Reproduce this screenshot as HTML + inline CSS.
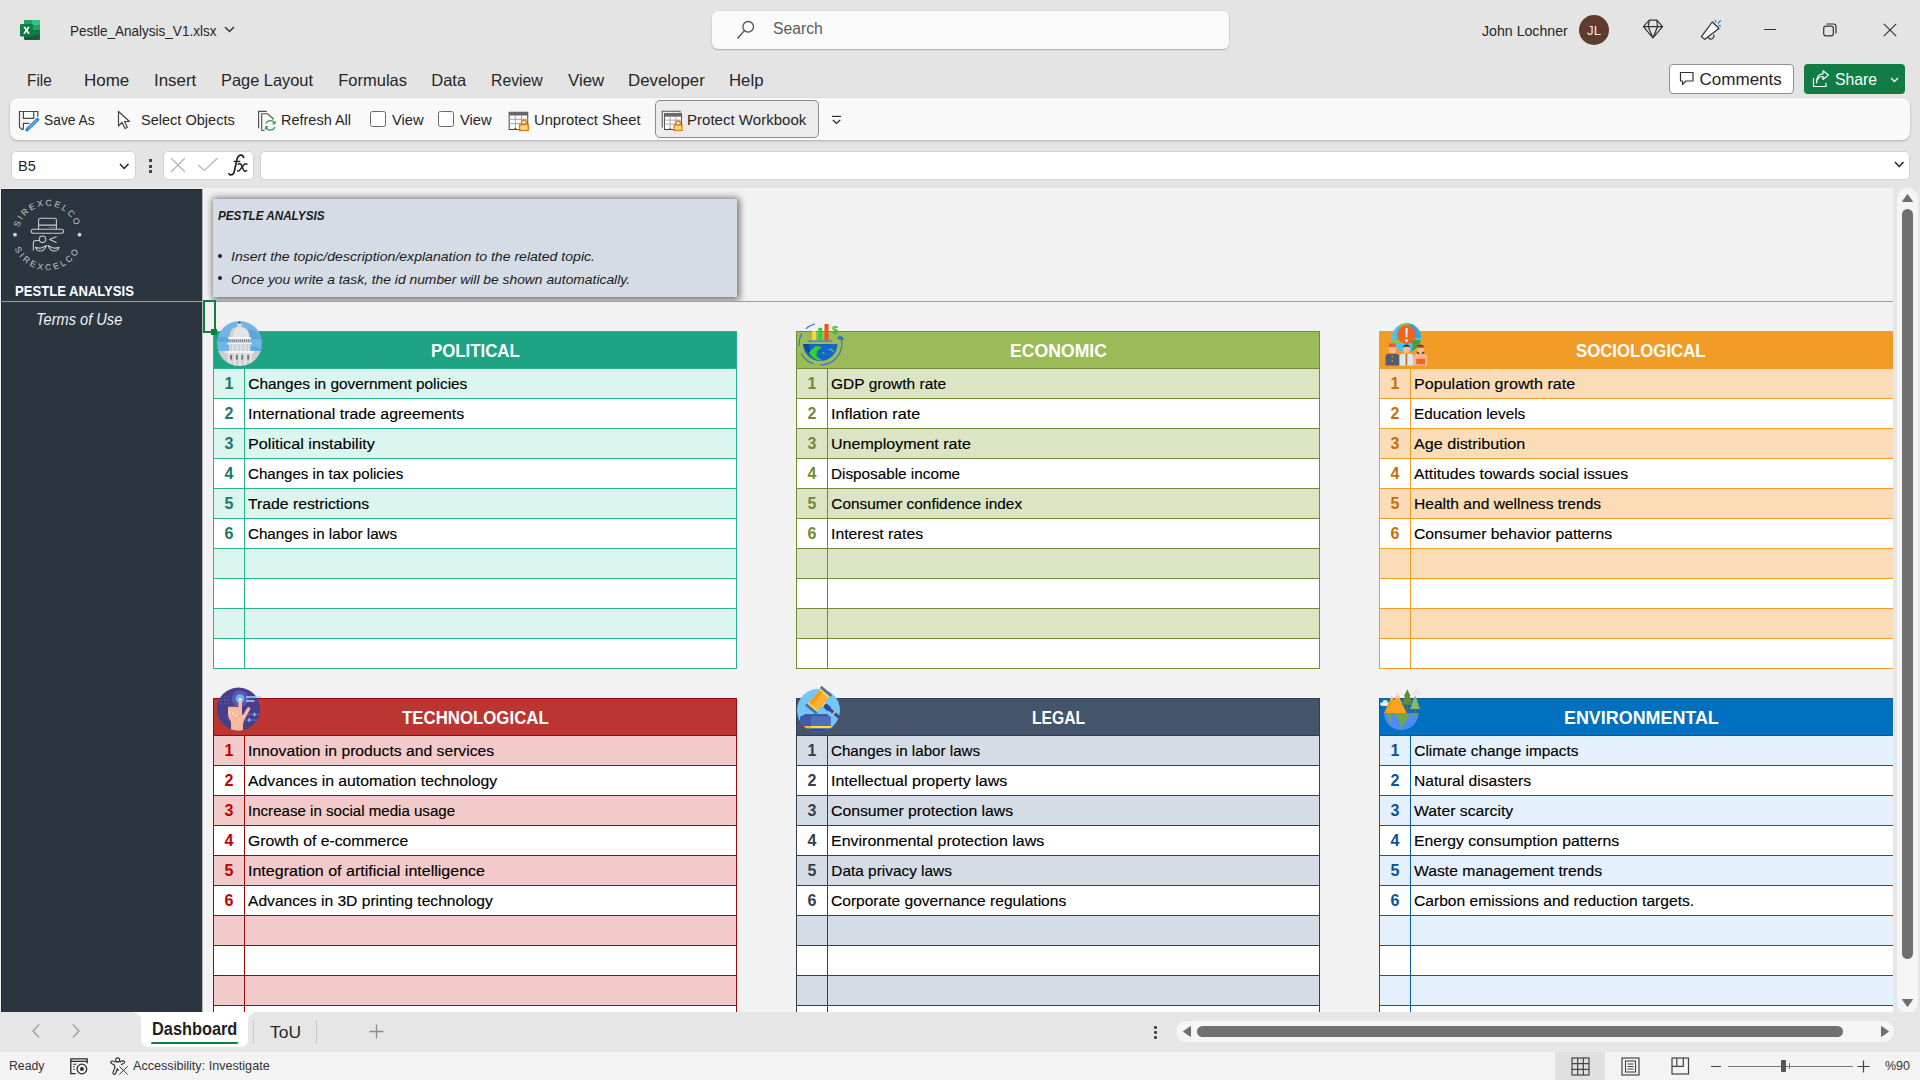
<!DOCTYPE html><html><head><meta charset="utf-8"><style>
html,body{margin:0;padding:0;width:1920px;height:1080px;overflow:hidden;background:#e4e4e4;font-family:"Liberation Sans",sans-serif;}
.r{position:absolute;box-sizing:border-box;}
.t{position:absolute;white-space:nowrap;line-height:1;}
svg.r{overflow:visible}
</style></head><body>
<div class="r" style="left:0px;top:0px;width:1920px;height:189px;background:#e4e4e4"></div>
<svg class="r" style="left:20px;top:20px" width="20" height="20" viewBox="0 0 20 20">
<rect x="4" y="0" width="16" height="20" rx="1.2" fill="#185c37"/>
<rect x="4" y="0" width="16" height="5" rx="1" fill="#21a366"/>
<rect x="12" y="0" width="8" height="5" rx="1" fill="#33c481"/>
<rect x="4" y="5" width="16" height="5" fill="#107c41"/>
<rect x="12" y="5" width="8" height="5" fill="#21a366"/>
<rect x="4" y="10" width="16" height="5" fill="#185c37"/>
<rect x="12" y="10" width="8" height="5" fill="#107c41"/>
<rect x="0" y="4" width="13" height="12.5" rx="1.2" fill="#107c41"/>
<path d="M3.3 6.8 L5.4 6.8 L6.6 9 L7.8 6.8 L9.8 6.8 L7.7 10.2 L9.9 13.7 L7.8 13.7 L6.5 11.4 L5.2 13.7 L3.2 13.7 L5.4 10.2 Z" fill="#fff"/>
</svg>
<div class="t" style="left:69.60px;top:22.86px;font-size:15.40px;color:#262626;font-weight:normal;font-style:normal;transform:scaleX(0.8777);transform-origin:0 0;">Pestle_Analysis_V1.xlsx</div>
<svg class="r" style="left:224px;top:26px" width="11" height="7" viewBox="0 0 11 7"><path d="M1 1 L5.5 5.5 L10 1" stroke="#333" stroke-width="1.5" fill="none"/></svg>
<div class="r" style="left:712px;top:11px;width:517px;height:38px;background:#fafafa;border-radius:6px;box-shadow:0 1px 1.5px rgba(0,0,0,0.22), 0 0 0 0.5px rgba(0,0,0,0.06)"></div>
<svg class="r" style="left:736px;top:20px" width="16" height="20" viewBox="0 0 16 20"><circle cx="12.2" cy="6.8" r="5.3" stroke="#505050" stroke-width="1.3" fill="none"/><path d="M8.4 10.6 L1.5 18.5" stroke="#505050" stroke-width="1.4"/></svg>
<div class="t" style="left:772.50px;top:21.26px;font-size:16.00px;color:#5c5c5c;font-weight:normal;font-style:normal;transform:scaleX(0.9823);transform-origin:0 0;">Search</div>
<div class="t" style="left:1482.00px;top:22.95px;font-size:15.30px;color:#262626;font-weight:normal;font-style:normal;transform:scaleX(0.9254);transform-origin:0 0;">John Lochner</div>
<div class="r" style="left:1579px;top:15px;width:30px;height:30px;border-radius:50%;background:#5f3b2f"></div>
<div class="t" style="left:1587.00px;top:24.84px;font-size:12.00px;color:#f0e8e4;font-weight:normal;font-style:normal;transform:scaleX(1.1046);transform-origin:0 0;">JL</div>
<svg class="r" style="left:1643px;top:19px" width="20" height="20" viewBox="0 0 20 20"><path d="M6.3 1.2 L13.8 1.2 L19.6 7.7 L9.9 18.9 L0.4 7.7 Z M0.4 7.7 L19.6 7.7 M6.3 1.2 L5.3 7.7 L9.9 18.9 L14.5 7.7 L13.8 1.2" stroke="#333" stroke-width="1.2" fill="none" stroke-linejoin="round"/></svg>
<svg class="r" style="left:1700px;top:18px" width="24" height="24" viewBox="0 0 24 24"><path d="M8.2 19.4 A2.9 2.9 0 1 0 13.6 16.6" stroke="#333" stroke-width="1.2" fill="none"/><path d="M1.4 18.6 L4.5 21.4 L19 10.5 L12.3 4 Z" stroke="#333" stroke-width="1.25" fill="#f7f7f7" stroke-linejoin="round"/><path d="M15.2 2.4 L15.6 4.2 M18.3 5 L20.4 2.7 M18.5 7.4 L20.6 8.1" stroke="#1e88e5" stroke-width="1.25" stroke-linecap="round"/></svg>
<div class="r" style="left:1764px;top:29px;width:12px;height:1.2px;background:#333"></div>
<svg class="r" style="left:1823px;top:23px" width="14" height="14" viewBox="0 0 14 14"><rect x="0.7" y="3.2" width="9.6" height="9.6" rx="2" stroke="#333" stroke-width="1.2" fill="none"/><path d="M3.5 1 L10.5 1 Q13 1 13 3.5 L13 10.5" stroke="#333" stroke-width="1.2" fill="none"/></svg>
<svg class="r" style="left:1883px;top:23px" width="14" height="14" viewBox="0 0 14 14"><path d="M0.8 0.8 L13.2 13.2 M13.2 0.8 L0.8 13.2" stroke="#333" stroke-width="1.2"/></svg>
<div class="t" style="left:27.00px;top:72.33px;font-size:16.50px;color:#262626;font-weight:normal;font-style:normal;transform:scaleX(0.9309);transform-origin:0 0;">File</div>
<div class="t" style="left:84.25px;top:72.33px;font-size:16.50px;color:#262626;font-weight:normal;font-style:normal;transform:scaleX(1.0281);transform-origin:0 0;">Home</div>
<div class="t" style="left:154.00px;top:72.33px;font-size:16.50px;color:#262626;font-weight:normal;font-style:normal;transform:scaleX(1.0238);transform-origin:0 0;">Insert</div>
<div class="t" style="left:221.25px;top:72.33px;font-size:16.50px;color:#262626;font-weight:normal;font-style:normal;transform:scaleX(0.9929);transform-origin:0 0;">Page Layout</div>
<div class="t" style="left:338.25px;top:72.33px;font-size:16.50px;color:#262626;font-weight:normal;font-style:normal;">Formulas</div>
<div class="t" style="left:431.25px;top:72.33px;font-size:16.50px;color:#262626;font-weight:normal;font-style:normal;">Data</div>
<div class="t" style="left:491.25px;top:72.33px;font-size:16.50px;color:#262626;font-weight:normal;font-style:normal;transform:scaleX(0.9565);transform-origin:0 0;">Review</div>
<div class="t" style="left:568.00px;top:72.33px;font-size:16.50px;color:#262626;font-weight:normal;font-style:normal;transform:scaleX(1.0221);transform-origin:0 0;">View</div>
<div class="t" style="left:628.25px;top:72.33px;font-size:16.50px;color:#262626;font-weight:normal;font-style:normal;transform:scaleX(1.0205);transform-origin:0 0;">Developer</div>
<div class="t" style="left:729.25px;top:72.33px;font-size:16.50px;color:#262626;font-weight:normal;font-style:normal;transform:scaleX(1.0166);transform-origin:0 0;">Help</div>
<div class="r" style="left:1669px;top:64px;width:125px;height:30px;background:#fff;border:1px solid #8f8f8f;border-radius:4px"></div>
<svg class="r" style="left:1679px;top:71px" width="16" height="16" viewBox="0 0 16 16"><path d="M1.5 1.5 L14 1.5 L14 10 L7 10 L3.5 13.5 L3.5 10 L1.5 10 Z" stroke="#333" stroke-width="1.2" fill="none" stroke-linejoin="round"/></svg>
<div class="t" style="left:1699.60px;top:70.81px;font-size:17.00px;color:#262626;font-weight:normal;font-style:normal;">Comments</div>
<div class="r" style="left:1804px;top:64px;width:101px;height:30px;background:#117c43;border-radius:4px"></div>
<svg class="r" style="left:1812px;top:70px" width="18" height="18" viewBox="0 0 18 18"><path d="M1.5 8 L1.5 16.5 L14 16.5 L14 13" stroke="#fff" stroke-width="1.2" fill="none"/><path d="M4.5 13 Q5 6.5 11 6.5 L11 9.5 L16.5 5 L11 0.8 L11 3.8 Q4.5 4 4.5 13 Z" stroke="#fff" stroke-width="1.2" fill="none" stroke-linejoin="round"/></svg>
<div class="t" style="left:1834.50px;top:70.81px;font-size:17.00px;color:#ffffff;font-weight:normal;font-style:normal;transform:scaleX(0.9258);transform-origin:0 0;">Share</div>
<svg class="r" style="left:1890px;top:77px" width="9" height="6" viewBox="0 0 9 6"><path d="M1 1 L4.5 4.5 L8 1" stroke="#fff" stroke-width="1.3" fill="none"/></svg>
<div class="r" style="left:10px;top:98px;width:1900px;height:42px;background:#f9f9f9;border-radius:8px;box-shadow:0 1px 2.5px rgba(0,0,0,0.25)"></div>
<svg class="r" style="left:18px;top:110px" width="23" height="22" viewBox="0 0 23 22"><path d="M1.5 17 L1.5 1.5 L19.8 1.5 L19.8 6.8" stroke="#4a4a4a" stroke-width="1.2" fill="none"/><path d="M1.5 17 L3.8 19.3 L5.6 19.3" stroke="#4a4a4a" stroke-width="1.2" fill="none"/><path d="M5.4 1.5 L5.4 8.3 L15.7 8.3 L15.7 1.5" stroke="#4a4a4a" stroke-width="1.2" fill="none"/><path d="M5.4 19.3 L5.4 13.4 L11.5 13.4" stroke="#4a4a4a" stroke-width="1.2" fill="none"/><path d="M9.2 19.6 L19.6 9.6" stroke="#2b88d8" stroke-width="3.4" stroke-linecap="round"/><path d="M10.2 18.6 L19 10.2" stroke="#9fcdf3" stroke-width="0.9"/><path d="M7.8 21 L9.6 19.2" stroke="#2b88d8" stroke-width="1.6"/></svg>
<div class="t" style="left:44.30px;top:111.78px;font-size:15.50px;color:#262626;font-weight:normal;font-style:normal;transform:scaleX(0.8915);transform-origin:0 0;">Save As</div>
<svg class="r" style="left:117px;top:110px" width="15" height="20" viewBox="0 0 15 20"><path d="M1.5 1.5 L1.5 16 L5 12.5 L8 18.5 L10.3 17.3 L7.5 11.5 L12.5 11.5 Z" stroke="#444" stroke-width="1.2" fill="none" stroke-linejoin="round"/></svg>
<div class="t" style="left:141.30px;top:111.78px;font-size:15.50px;color:#262626;font-weight:normal;font-style:normal;transform:scaleX(0.9376);transform-origin:0 0;">Select Objects</div>
<svg class="r" style="left:257px;top:110px" width="21" height="22" viewBox="0 0 21 22"><path d="M1.6 18.2 L1.6 1.4 L9.8 1.4" stroke="#505050" stroke-width="1.15" fill="none"/><path d="M4.7 20.5 L4.7 3.7 L10.6 3.7 L16 8.6 L16 9.8 M4.7 20.5 L7.5 20.5" stroke="#505050" stroke-width="1.15" fill="none"/><path d="M8.8 13.66 A4.8 4.8 0 0 1 17.8 13.66 M15.4 13.9 L17.9 13.7 L18.3 11.2" stroke="#2ea043" stroke-width="1.2" fill="none"/><path d="M17.8 16.94 A4.8 4.8 0 0 1 8.8 16.94 M11.2 16.7 L8.7 16.9 L8.3 19.4" stroke="#2ea043" stroke-width="1.2" fill="none"/></svg>
<div class="t" style="left:281.30px;top:111.78px;font-size:15.50px;color:#262626;font-weight:normal;font-style:normal;transform:scaleX(0.9339);transform-origin:0 0;">Refresh All</div>
<div class="r" style="left:370px;top:111px;width:16px;height:16px;background:#fff;border:1px solid #6a6a6a;border-radius:2.5px"></div>
<div class="t" style="left:392.00px;top:111.78px;font-size:15.50px;color:#262626;font-weight:normal;font-style:normal;transform:scaleX(0.9514);transform-origin:0 0;">View</div>
<div class="r" style="left:438px;top:111px;width:16px;height:16px;background:#fff;border:1px solid #6a6a6a;border-radius:2.5px"></div>
<div class="t" style="left:460.00px;top:111.78px;font-size:15.50px;color:#262626;font-weight:normal;font-style:normal;transform:scaleX(0.9514);transform-origin:0 0;">View</div>
<svg class="r" style="left:508px;top:110px" width="23" height="23" viewBox="0 0 23 23"><g transform="translate(0 0)"><rect x="1.2" y="2.3" width="18.5" height="17.2" stroke="#555" stroke-width="1.1" fill="#fff"/><rect x="1.2" y="2.3" width="18.5" height="3.2" fill="#666"/><path d="M1.2 9.3 L19.7 9.3 M1.2 13.6 L19.7 13.6 M7.3 5.5 L7.3 19.5 M13.5 5.5 L13.5 19.5" stroke="#9a9a9a" stroke-width="0.9"/><path d="M1.2 19.5 L6.5 19.5 L8 18" stroke="#444" stroke-width="1.1" fill="none"/><rect x="11.6" y="14.6" width="8.6" height="5.9" fill="#f8d88a" stroke="#e27d12" stroke-width="1.4"/><path d="M13.5 14.6 L13.5 12.6 A2.4 2.4 0 0 1 18.3 12.6 L18.3 14.6" stroke="#e27d12" stroke-width="1.4" fill="none"/></g></svg>
<div class="t" style="left:534.30px;top:111.78px;font-size:15.50px;color:#262626;font-weight:normal;font-style:normal;transform:scaleX(0.9508);transform-origin:0 0;">Unprotect Sheet</div>
<div class="r" style="left:655px;top:100px;width:164px;height:38px;background:#ececec;border:1px solid #8c8c8c;border-radius:5px"></div>
<svg class="r" style="left:661px;top:110px" width="23" height="23" viewBox="0 0 23 23"><path d="M1.2 17.5 L1.2 1.2 L19 1.2 L19 2.6" stroke="#555" stroke-width="1.1" fill="none"/><g transform="translate(2.4 1.6) scale(0.92)"><rect x="1.2" y="2.3" width="18.5" height="17.2" stroke="#555" stroke-width="1.1" fill="#fff"/><rect x="1.2" y="2.3" width="18.5" height="3.2" fill="#666"/><path d="M1.2 9.3 L19.7 9.3 M1.2 13.6 L19.7 13.6 M7.3 5.5 L7.3 19.5 M13.5 5.5 L13.5 19.5" stroke="#9a9a9a" stroke-width="0.9"/><path d="M1.2 19.5 L6.5 19.5 L8 18" stroke="#444" stroke-width="1.1" fill="none"/><rect x="11.6" y="14.6" width="8.6" height="5.9" fill="#f8d88a" stroke="#e27d12" stroke-width="1.4"/><path d="M13.5 14.6 L13.5 12.6 A2.4 2.4 0 0 1 18.3 12.6 L18.3 14.6" stroke="#e27d12" stroke-width="1.4" fill="none"/></g></svg>
<div class="t" style="left:687.00px;top:111.78px;font-size:15.50px;color:#262626;font-weight:normal;font-style:normal;transform:scaleX(0.9707);transform-origin:0 0;">Protect Workbook</div>
<svg class="r" style="left:831px;top:114px" width="11" height="11" viewBox="0 0 11 11"><path d="M1 2.4 L10 2.4" stroke="#262626" stroke-width="1.15"/><path d="M1.8 6 L5.5 9.4 L9.2 6" stroke="#262626" stroke-width="1.2" fill="none"/></svg>
<div class="r" style="left:11px;top:150.5px;width:125px;height:29px;background:#fff;border:1px solid #d2d2d2;border-radius:5px"></div>
<div class="t" style="left:17.60px;top:158.65px;font-size:14.00px;color:#1f1f1f;font-weight:normal;font-style:normal;transform:scaleX(1.0394);transform-origin:0 0;">B5</div>
<svg class="r" style="left:119px;top:163px" width="11" height="7" viewBox="0 0 11 7"><path d="M1 1 L5.2 5.5 L9.5 1" stroke="#222" stroke-width="1.5" fill="none"/></svg>
<div class="r" style="left:148.5px;top:159px;width:3px;height:3px;background:#444"></div>
<div class="r" style="left:148.5px;top:165px;width:3px;height:3px;background:#444"></div>
<div class="r" style="left:148.5px;top:170px;width:3px;height:3px;background:#444"></div>
<div class="r" style="left:162.5px;top:150.5px;width:91px;height:29px;background:#fff;border:1px solid #d2d2d2;border-radius:5px"></div>
<svg class="r" style="left:170px;top:157px" width="16" height="16" viewBox="0 0 16 16"><path d="M1 1 L15 15 M15 1 L1 15" stroke="#b4b4b4" stroke-width="1.2"/></svg>
<svg class="r" style="left:197px;top:157px" width="22" height="15" viewBox="0 0 22 15"><path d="M1 8 L7.5 13.5 L20.5 1" stroke="#b4b4b4" stroke-width="1.2" fill="none"/></svg>
<svg class="r" style="left:220px;top:150px" width="40" height="30" viewBox="220 150 40 30"><path d="M243.6 157.4 Q243 154.7 240.3 155.2 Q237.6 155.8 236.7 160.5 L234.4 171 Q233.5 175 230.6 174.9 Q229.3 174.8 229 173.7" stroke="#222" stroke-width="1.7" fill="none" stroke-linecap="round"/><path d="M233.6 161.4 L240.3 161.4" stroke="#222" stroke-width="1.3"/><path d="M238.3 164.2 Q240.4 162.6 241.6 165.3 L243.4 169.8 Q244.4 172.2 246.6 170.6" stroke="#222" stroke-width="1.5" fill="none" stroke-linecap="round"/><path d="M246.9 164.3 Q245.6 162.9 243.9 164.7 L239.9 169.9 Q238.7 171.6 237.7 170.7" stroke="#222" stroke-width="1.5" fill="none" stroke-linecap="round"/></svg>
<div class="r" style="left:260px;top:150.5px;width:1650px;height:29px;background:#fff;border:1px solid #d2d2d2;border-radius:5px"></div>
<svg class="r" style="left:1894px;top:161px" width="11" height="7" viewBox="0 0 11 7"><path d="M1 1 L5.2 5.5 L9.5 1" stroke="#222" stroke-width="1.5" fill="none"/></svg>
<div class="r" style="left:0px;top:188px;width:1893px;height:824px;background:#f2f2f2"></div>
<div class="r" style="left:1893px;top:189px;width:27px;height:823px;background:#e6e6e6"></div>
<div class="r" style="left:1897px;top:188px;width:21px;height:826px;background:#f5f5f5;border-radius:11px"></div>
<svg class="r" style="left:1902px;top:194px" width="11" height="8" viewBox="0 0 11 8"><path d="M5.5 0.5 L10.5 7.5 L0.5 7.5 Z" fill="#6e6e6e" stroke="#6e6e6e" stroke-width="1" stroke-linejoin="round"/></svg>
<div class="r" style="left:1902px;top:209px;width:11px;height:750px;background:#707070;border-radius:5.5px"></div>
<svg class="r" style="left:1902px;top:999px" width="11" height="8" viewBox="0 0 11 8"><path d="M0.5 0.5 L10.5 0.5 L5.5 7.5 Z" fill="#6e6e6e" stroke="#6e6e6e" stroke-width="1" stroke-linejoin="round"/></svg>
<div class="r" style="left:1px;top:189px;width:201px;height:823px;background:#2b3540;border-top:1px solid #1e2832;border-left:1px solid #1e2832"></div>
<div class="r" style="left:213px;top:199px;width:524px;height:98px;background:#d6dce5;box-shadow:0.5px 1px 7px 2px rgba(0,0,0,0.55);clip-path:inset(-12px -12px -4px -12px)"></div>
<div class="t" style="left:217.50px;top:209.00px;font-size:13.00px;color:#1a1a1a;font-weight:bold;font-style:italic;transform:scaleX(0.8990);transform-origin:0 0;">PESTLE ANALYSIS</div>
<div class="r" style="left:218px;top:254px;width:4.2px;height:4.2px;border-radius:50%;background:#222"></div>
<div class="t" style="left:230.60px;top:250.17px;font-size:13.50px;color:#1a1a1a;font-weight:normal;font-style:italic;transform:scaleX(1.0431);transform-origin:0 0;">Insert the topic/description/explanation to the related topic.</div>
<div class="r" style="left:218px;top:276.2px;width:4.2px;height:4.2px;border-radius:50%;background:#222"></div>
<div class="t" style="left:230.60px;top:272.57px;font-size:13.50px;color:#1a1a1a;font-weight:normal;font-style:italic;transform:scaleX(1.0252);transform-origin:0 0;">Once you write a task, the id number will be shown automatically.</div>
<div class="r" style="left:213px;top:331px;width:524px;height:37px;background:#1fa385"></div>
<div class="r" style="left:213px;top:331px;width:524px;height:1px;background:#27b393"></div>
<div class="r" style="left:213px;top:331px;width:1px;height:37px;background:#27b393"></div>
<div class="r" style="left:736px;top:331px;width:1px;height:37px;background:#27b393"></div>
<div class="r" style="left:213px;top:368px;width:524px;height:30px;background:#dbf5ef"></div>
<div class="r" style="left:213px;top:398px;width:524px;height:30px;background:#ffffff"></div>
<div class="r" style="left:213px;top:428px;width:524px;height:30px;background:#dbf5ef"></div>
<div class="r" style="left:213px;top:458px;width:524px;height:30px;background:#ffffff"></div>
<div class="r" style="left:213px;top:488px;width:524px;height:30px;background:#dbf5ef"></div>
<div class="r" style="left:213px;top:518px;width:524px;height:30px;background:#ffffff"></div>
<div class="r" style="left:213px;top:548px;width:524px;height:30px;background:#dbf5ef"></div>
<div class="r" style="left:213px;top:578px;width:524px;height:30px;background:#ffffff"></div>
<div class="r" style="left:213px;top:608px;width:524px;height:30px;background:#dbf5ef"></div>
<div class="r" style="left:213px;top:638px;width:524px;height:30px;background:#ffffff"></div>
<div class="r" style="left:213px;top:368px;width:524px;height:1px;background:#27b393"></div>
<div class="r" style="left:213px;top:398px;width:524px;height:1px;background:#27b393"></div>
<div class="r" style="left:213px;top:428px;width:524px;height:1px;background:#27b393"></div>
<div class="r" style="left:213px;top:458px;width:524px;height:1px;background:#27b393"></div>
<div class="r" style="left:213px;top:488px;width:524px;height:1px;background:#27b393"></div>
<div class="r" style="left:213px;top:518px;width:524px;height:1px;background:#27b393"></div>
<div class="r" style="left:213px;top:548px;width:524px;height:1px;background:#27b393"></div>
<div class="r" style="left:213px;top:578px;width:524px;height:1px;background:#27b393"></div>
<div class="r" style="left:213px;top:608px;width:524px;height:1px;background:#27b393"></div>
<div class="r" style="left:213px;top:638px;width:524px;height:1px;background:#27b393"></div>
<div class="r" style="left:213px;top:668px;width:524px;height:1px;background:#27b393"></div>
<div class="t" style="left:224.55px;top:375.56px;font-size:16.00px;color:#197a67;font-weight:bold;font-style:normal;">1</div>
<div class="t" style="left:248.30px;top:375.76px;font-size:15.40px;color:#000000;font-weight:normal;font-style:normal;-webkit-text-stroke:0.15px #000;">Changes in government policies</div>
<div class="t" style="left:224.55px;top:405.56px;font-size:16.00px;color:#197a67;font-weight:bold;font-style:normal;">2</div>
<div class="t" style="left:248.30px;top:405.76px;font-size:15.40px;color:#000000;font-weight:normal;font-style:normal;transform:scaleX(1.0312);transform-origin:0 0;-webkit-text-stroke:0.15px #000;">International trade agreements</div>
<div class="t" style="left:224.55px;top:435.56px;font-size:16.00px;color:#197a67;font-weight:bold;font-style:normal;">3</div>
<div class="t" style="left:248.30px;top:435.76px;font-size:15.40px;color:#000000;font-weight:normal;font-style:normal;transform:scaleX(1.0522);transform-origin:0 0;-webkit-text-stroke:0.15px #000;">Political instability</div>
<div class="t" style="left:224.55px;top:465.56px;font-size:16.00px;color:#197a67;font-weight:bold;font-style:normal;">4</div>
<div class="t" style="left:248.30px;top:465.76px;font-size:15.40px;color:#000000;font-weight:normal;font-style:normal;transform:scaleX(0.9805);transform-origin:0 0;-webkit-text-stroke:0.15px #000;">Changes in tax policies</div>
<div class="t" style="left:224.55px;top:495.56px;font-size:16.00px;color:#197a67;font-weight:bold;font-style:normal;">5</div>
<div class="t" style="left:248.30px;top:495.76px;font-size:15.40px;color:#000000;font-weight:normal;font-style:normal;transform:scaleX(1.0238);transform-origin:0 0;-webkit-text-stroke:0.15px #000;">Trade restrictions</div>
<div class="t" style="left:224.55px;top:525.56px;font-size:16.00px;color:#197a67;font-weight:bold;font-style:normal;">6</div>
<div class="t" style="left:248.30px;top:525.76px;font-size:15.40px;color:#000000;font-weight:normal;font-style:normal;transform:scaleX(0.9846);transform-origin:0 0;-webkit-text-stroke:0.15px #000;">Changes in labor laws</div>
<div class="r" style="left:213px;top:368px;width:1px;height:301px;background:#27b393"></div>
<div class="r" style="left:244px;top:368px;width:1px;height:301px;background:#27b393"></div>
<div class="r" style="left:736px;top:368px;width:1px;height:301px;background:#27b393"></div>
<div class="t" style="left:431.20px;top:341.56px;font-size:18.00px;color:#ffffff;font-weight:bold;font-style:normal;transform:scaleX(0.9337);transform-origin:0 0;">POLITICAL</div>
<div class="r" style="left:796px;top:331px;width:524px;height:37px;background:#9bbb59"></div>
<div class="r" style="left:796px;top:331px;width:524px;height:1px;background:#6e8c34"></div>
<div class="r" style="left:796px;top:331px;width:1px;height:37px;background:#6e8c34"></div>
<div class="r" style="left:1319px;top:331px;width:1px;height:37px;background:#6e8c34"></div>
<div class="r" style="left:796px;top:368px;width:524px;height:30px;background:#dbe5c3"></div>
<div class="r" style="left:796px;top:398px;width:524px;height:30px;background:#ffffff"></div>
<div class="r" style="left:796px;top:428px;width:524px;height:30px;background:#dbe5c3"></div>
<div class="r" style="left:796px;top:458px;width:524px;height:30px;background:#ffffff"></div>
<div class="r" style="left:796px;top:488px;width:524px;height:30px;background:#dbe5c3"></div>
<div class="r" style="left:796px;top:518px;width:524px;height:30px;background:#ffffff"></div>
<div class="r" style="left:796px;top:548px;width:524px;height:30px;background:#dbe5c3"></div>
<div class="r" style="left:796px;top:578px;width:524px;height:30px;background:#ffffff"></div>
<div class="r" style="left:796px;top:608px;width:524px;height:30px;background:#dbe5c3"></div>
<div class="r" style="left:796px;top:638px;width:524px;height:30px;background:#ffffff"></div>
<div class="r" style="left:796px;top:368px;width:524px;height:1px;background:#6e8c34"></div>
<div class="r" style="left:796px;top:398px;width:524px;height:1px;background:#6e8c34"></div>
<div class="r" style="left:796px;top:428px;width:524px;height:1px;background:#6e8c34"></div>
<div class="r" style="left:796px;top:458px;width:524px;height:1px;background:#6e8c34"></div>
<div class="r" style="left:796px;top:488px;width:524px;height:1px;background:#6e8c34"></div>
<div class="r" style="left:796px;top:518px;width:524px;height:1px;background:#6e8c34"></div>
<div class="r" style="left:796px;top:548px;width:524px;height:1px;background:#6e8c34"></div>
<div class="r" style="left:796px;top:578px;width:524px;height:1px;background:#6e8c34"></div>
<div class="r" style="left:796px;top:608px;width:524px;height:1px;background:#6e8c34"></div>
<div class="r" style="left:796px;top:638px;width:524px;height:1px;background:#6e8c34"></div>
<div class="r" style="left:796px;top:668px;width:524px;height:1px;background:#6e8c34"></div>
<div class="t" style="left:807.55px;top:375.56px;font-size:16.00px;color:#6f8a33;font-weight:bold;font-style:normal;">1</div>
<div class="t" style="left:831.30px;top:375.76px;font-size:15.40px;color:#000000;font-weight:normal;font-style:normal;transform:scaleX(1.0077);transform-origin:0 0;-webkit-text-stroke:0.15px #000;">GDP growth rate</div>
<div class="t" style="left:807.55px;top:405.56px;font-size:16.00px;color:#6f8a33;font-weight:bold;font-style:normal;">2</div>
<div class="t" style="left:831.30px;top:405.76px;font-size:15.40px;color:#000000;font-weight:normal;font-style:normal;transform:scaleX(1.0527);transform-origin:0 0;-webkit-text-stroke:0.15px #000;">Inflation rate</div>
<div class="t" style="left:807.55px;top:435.56px;font-size:16.00px;color:#6f8a33;font-weight:bold;font-style:normal;">3</div>
<div class="t" style="left:831.30px;top:435.76px;font-size:15.40px;color:#000000;font-weight:normal;font-style:normal;transform:scaleX(1.0416);transform-origin:0 0;-webkit-text-stroke:0.15px #000;">Unemployment rate</div>
<div class="t" style="left:807.55px;top:465.56px;font-size:16.00px;color:#6f8a33;font-weight:bold;font-style:normal;">4</div>
<div class="t" style="left:831.30px;top:465.76px;font-size:15.40px;color:#000000;font-weight:normal;font-style:normal;transform:scaleX(0.9929);transform-origin:0 0;-webkit-text-stroke:0.15px #000;">Disposable income</div>
<div class="t" style="left:807.55px;top:495.56px;font-size:16.00px;color:#6f8a33;font-weight:bold;font-style:normal;">5</div>
<div class="t" style="left:831.30px;top:495.76px;font-size:15.40px;color:#000000;font-weight:normal;font-style:normal;-webkit-text-stroke:0.15px #000;">Consumer confidence index</div>
<div class="t" style="left:807.55px;top:525.56px;font-size:16.00px;color:#6f8a33;font-weight:bold;font-style:normal;">6</div>
<div class="t" style="left:831.30px;top:525.76px;font-size:15.40px;color:#000000;font-weight:normal;font-style:normal;transform:scaleX(1.0261);transform-origin:0 0;-webkit-text-stroke:0.15px #000;">Interest rates</div>
<div class="r" style="left:796px;top:368px;width:1px;height:301px;background:#6e8c34"></div>
<div class="r" style="left:827px;top:368px;width:1px;height:301px;background:#6e8c34"></div>
<div class="r" style="left:1319px;top:368px;width:1px;height:301px;background:#6e8c34"></div>
<div class="t" style="left:1010.10px;top:341.56px;font-size:18.00px;color:#ffffff;font-weight:bold;font-style:normal;transform:scaleX(0.9798);transform-origin:0 0;">ECONOMIC</div>
<div class="r" style="left:1379px;top:331px;width:514px;height:37px;background:#f29c28"></div>
<div class="r" style="left:1379px;top:331px;width:514px;height:1px;background:#f29c28"></div>
<div class="r" style="left:1379px;top:331px;width:1px;height:37px;background:#f29c28"></div>
<div class="r" style="left:1379px;top:368px;width:514px;height:30px;background:#fadcb6"></div>
<div class="r" style="left:1379px;top:398px;width:514px;height:30px;background:#ffffff"></div>
<div class="r" style="left:1379px;top:428px;width:514px;height:30px;background:#fadcb6"></div>
<div class="r" style="left:1379px;top:458px;width:514px;height:30px;background:#ffffff"></div>
<div class="r" style="left:1379px;top:488px;width:514px;height:30px;background:#fadcb6"></div>
<div class="r" style="left:1379px;top:518px;width:514px;height:30px;background:#ffffff"></div>
<div class="r" style="left:1379px;top:548px;width:514px;height:30px;background:#fadcb6"></div>
<div class="r" style="left:1379px;top:578px;width:514px;height:30px;background:#ffffff"></div>
<div class="r" style="left:1379px;top:608px;width:514px;height:30px;background:#fadcb6"></div>
<div class="r" style="left:1379px;top:638px;width:514px;height:30px;background:#ffffff"></div>
<div class="r" style="left:1379px;top:368px;width:514px;height:1px;background:#f29c28"></div>
<div class="r" style="left:1379px;top:398px;width:514px;height:1px;background:#f29c28"></div>
<div class="r" style="left:1379px;top:428px;width:514px;height:1px;background:#f29c28"></div>
<div class="r" style="left:1379px;top:458px;width:514px;height:1px;background:#f29c28"></div>
<div class="r" style="left:1379px;top:488px;width:514px;height:1px;background:#f29c28"></div>
<div class="r" style="left:1379px;top:518px;width:514px;height:1px;background:#f29c28"></div>
<div class="r" style="left:1379px;top:548px;width:514px;height:1px;background:#f29c28"></div>
<div class="r" style="left:1379px;top:578px;width:514px;height:1px;background:#f29c28"></div>
<div class="r" style="left:1379px;top:608px;width:514px;height:1px;background:#f29c28"></div>
<div class="r" style="left:1379px;top:638px;width:514px;height:1px;background:#f29c28"></div>
<div class="r" style="left:1379px;top:668px;width:514px;height:1px;background:#f29c28"></div>
<div class="t" style="left:1390.55px;top:375.56px;font-size:16.00px;color:#c46f0a;font-weight:bold;font-style:normal;">1</div>
<div class="t" style="left:1414.30px;top:375.76px;font-size:15.40px;color:#000000;font-weight:normal;font-style:normal;transform:scaleX(1.0466);transform-origin:0 0;-webkit-text-stroke:0.15px #000;">Population growth rate</div>
<div class="t" style="left:1390.55px;top:405.56px;font-size:16.00px;color:#c46f0a;font-weight:bold;font-style:normal;">2</div>
<div class="t" style="left:1414.30px;top:405.76px;font-size:15.40px;color:#000000;font-weight:normal;font-style:normal;transform:scaleX(0.9924);transform-origin:0 0;-webkit-text-stroke:0.15px #000;">Education levels</div>
<div class="t" style="left:1390.55px;top:435.56px;font-size:16.00px;color:#c46f0a;font-weight:bold;font-style:normal;">3</div>
<div class="t" style="left:1414.30px;top:435.76px;font-size:15.40px;color:#000000;font-weight:normal;font-style:normal;transform:scaleX(1.0486);transform-origin:0 0;-webkit-text-stroke:0.15px #000;">Age distribution</div>
<div class="t" style="left:1390.55px;top:465.56px;font-size:16.00px;color:#c46f0a;font-weight:bold;font-style:normal;">4</div>
<div class="t" style="left:1414.30px;top:465.76px;font-size:15.40px;color:#000000;font-weight:normal;font-style:normal;transform:scaleX(1.0214);transform-origin:0 0;-webkit-text-stroke:0.15px #000;">Attitudes towards social issues</div>
<div class="t" style="left:1390.55px;top:495.56px;font-size:16.00px;color:#c46f0a;font-weight:bold;font-style:normal;">5</div>
<div class="t" style="left:1414.30px;top:495.76px;font-size:15.40px;color:#000000;font-weight:normal;font-style:normal;transform:scaleX(1.0124);transform-origin:0 0;-webkit-text-stroke:0.15px #000;">Health and wellness trends</div>
<div class="t" style="left:1390.55px;top:525.56px;font-size:16.00px;color:#c46f0a;font-weight:bold;font-style:normal;">6</div>
<div class="t" style="left:1414.30px;top:525.76px;font-size:15.40px;color:#000000;font-weight:normal;font-style:normal;transform:scaleX(1.0205);transform-origin:0 0;-webkit-text-stroke:0.15px #000;">Consumer behavior patterns</div>
<div class="r" style="left:1379px;top:368px;width:1px;height:301px;background:#f29c28"></div>
<div class="r" style="left:1410px;top:368px;width:1px;height:301px;background:#f29c28"></div>
<div class="t" style="left:1576.25px;top:341.56px;font-size:18.00px;color:#ffffff;font-weight:bold;font-style:normal;transform:scaleX(0.9320);transform-origin:0 0;">SOCIOLOGICAL</div>
<div class="r" style="left:213px;top:698px;width:524px;height:37px;background:#bc3530"></div>
<div class="r" style="left:213px;top:698px;width:524px;height:1px;background:#990a0a"></div>
<div class="r" style="left:213px;top:698px;width:1px;height:37px;background:#990a0a"></div>
<div class="r" style="left:736px;top:698px;width:1px;height:37px;background:#990a0a"></div>
<div class="r" style="left:213px;top:735px;width:524px;height:30px;background:#f2caca"></div>
<div class="r" style="left:213px;top:765px;width:524px;height:30px;background:#ffffff"></div>
<div class="r" style="left:213px;top:795px;width:524px;height:30px;background:#f2caca"></div>
<div class="r" style="left:213px;top:825px;width:524px;height:30px;background:#ffffff"></div>
<div class="r" style="left:213px;top:855px;width:524px;height:30px;background:#f2caca"></div>
<div class="r" style="left:213px;top:885px;width:524px;height:30px;background:#ffffff"></div>
<div class="r" style="left:213px;top:915px;width:524px;height:30px;background:#f2caca"></div>
<div class="r" style="left:213px;top:945px;width:524px;height:30px;background:#ffffff"></div>
<div class="r" style="left:213px;top:975px;width:524px;height:30px;background:#f2caca"></div>
<div class="r" style="left:213px;top:1005px;width:524px;height:7px;background:#ffffff"></div>
<div class="r" style="left:213px;top:735px;width:524px;height:1px;background:#990a0a"></div>
<div class="r" style="left:213px;top:765px;width:524px;height:1px;background:#990a0a"></div>
<div class="r" style="left:213px;top:795px;width:524px;height:1px;background:#990a0a"></div>
<div class="r" style="left:213px;top:825px;width:524px;height:1px;background:#990a0a"></div>
<div class="r" style="left:213px;top:855px;width:524px;height:1px;background:#990a0a"></div>
<div class="r" style="left:213px;top:885px;width:524px;height:1px;background:#990a0a"></div>
<div class="r" style="left:213px;top:915px;width:524px;height:1px;background:#990a0a"></div>
<div class="r" style="left:213px;top:945px;width:524px;height:1px;background:#990a0a"></div>
<div class="r" style="left:213px;top:975px;width:524px;height:1px;background:#990a0a"></div>
<div class="r" style="left:213px;top:1005px;width:524px;height:1px;background:#990a0a"></div>
<div class="t" style="left:224.55px;top:742.56px;font-size:16.00px;color:#c00000;font-weight:bold;font-style:normal;">1</div>
<div class="t" style="left:248.30px;top:742.76px;font-size:15.40px;color:#000000;font-weight:normal;font-style:normal;transform:scaleX(1.0202);transform-origin:0 0;-webkit-text-stroke:0.15px #000;">Innovation in products and services</div>
<div class="t" style="left:224.55px;top:772.56px;font-size:16.00px;color:#c00000;font-weight:bold;font-style:normal;">2</div>
<div class="t" style="left:248.30px;top:772.76px;font-size:15.40px;color:#000000;font-weight:normal;font-style:normal;transform:scaleX(1.0250);transform-origin:0 0;-webkit-text-stroke:0.15px #000;">Advances in automation technology</div>
<div class="t" style="left:224.55px;top:802.56px;font-size:16.00px;color:#c00000;font-weight:bold;font-style:normal;">3</div>
<div class="t" style="left:248.30px;top:802.76px;font-size:15.40px;color:#000000;font-weight:normal;font-style:normal;transform:scaleX(0.9799);transform-origin:0 0;-webkit-text-stroke:0.15px #000;">Increase in social media usage</div>
<div class="t" style="left:224.55px;top:832.56px;font-size:16.00px;color:#c00000;font-weight:bold;font-style:normal;">4</div>
<div class="t" style="left:248.30px;top:832.76px;font-size:15.40px;color:#000000;font-weight:normal;font-style:normal;transform:scaleX(1.0235);transform-origin:0 0;-webkit-text-stroke:0.15px #000;">Growth of e-commerce</div>
<div class="t" style="left:224.55px;top:862.56px;font-size:16.00px;color:#c00000;font-weight:bold;font-style:normal;">5</div>
<div class="t" style="left:248.30px;top:862.76px;font-size:15.40px;color:#000000;font-weight:normal;font-style:normal;transform:scaleX(1.0416);transform-origin:0 0;-webkit-text-stroke:0.15px #000;">Integration of artificial intelligence</div>
<div class="t" style="left:224.55px;top:892.56px;font-size:16.00px;color:#c00000;font-weight:bold;font-style:normal;">6</div>
<div class="t" style="left:248.30px;top:892.76px;font-size:15.40px;color:#000000;font-weight:normal;font-style:normal;transform:scaleX(1.0148);transform-origin:0 0;-webkit-text-stroke:0.15px #000;">Advances in 3D printing technology</div>
<div class="r" style="left:213px;top:735px;width:1px;height:277px;background:#990a0a"></div>
<div class="r" style="left:244px;top:735px;width:1px;height:277px;background:#990a0a"></div>
<div class="r" style="left:736px;top:735px;width:1px;height:277px;background:#990a0a"></div>
<div class="t" style="left:402.00px;top:708.56px;font-size:18.00px;color:#ffffff;font-weight:bold;font-style:normal;transform:scaleX(0.9344);transform-origin:0 0;">TECHNOLOGICAL</div>
<div class="r" style="left:796px;top:698px;width:524px;height:37px;background:#44546a"></div>
<div class="r" style="left:796px;top:698px;width:524px;height:1px;background:#333f50"></div>
<div class="r" style="left:796px;top:698px;width:1px;height:37px;background:#333f50"></div>
<div class="r" style="left:1319px;top:698px;width:1px;height:37px;background:#333f50"></div>
<div class="r" style="left:796px;top:735px;width:524px;height:30px;background:#d6dce5"></div>
<div class="r" style="left:796px;top:765px;width:524px;height:30px;background:#ffffff"></div>
<div class="r" style="left:796px;top:795px;width:524px;height:30px;background:#d6dce5"></div>
<div class="r" style="left:796px;top:825px;width:524px;height:30px;background:#ffffff"></div>
<div class="r" style="left:796px;top:855px;width:524px;height:30px;background:#d6dce5"></div>
<div class="r" style="left:796px;top:885px;width:524px;height:30px;background:#ffffff"></div>
<div class="r" style="left:796px;top:915px;width:524px;height:30px;background:#d6dce5"></div>
<div class="r" style="left:796px;top:945px;width:524px;height:30px;background:#ffffff"></div>
<div class="r" style="left:796px;top:975px;width:524px;height:30px;background:#d6dce5"></div>
<div class="r" style="left:796px;top:1005px;width:524px;height:7px;background:#ffffff"></div>
<div class="r" style="left:796px;top:735px;width:524px;height:1px;background:#333f50"></div>
<div class="r" style="left:796px;top:765px;width:524px;height:1px;background:#333f50"></div>
<div class="r" style="left:796px;top:795px;width:524px;height:1px;background:#333f50"></div>
<div class="r" style="left:796px;top:825px;width:524px;height:1px;background:#333f50"></div>
<div class="r" style="left:796px;top:855px;width:524px;height:1px;background:#333f50"></div>
<div class="r" style="left:796px;top:885px;width:524px;height:1px;background:#333f50"></div>
<div class="r" style="left:796px;top:915px;width:524px;height:1px;background:#333f50"></div>
<div class="r" style="left:796px;top:945px;width:524px;height:1px;background:#333f50"></div>
<div class="r" style="left:796px;top:975px;width:524px;height:1px;background:#333f50"></div>
<div class="r" style="left:796px;top:1005px;width:524px;height:1px;background:#333f50"></div>
<div class="t" style="left:807.55px;top:742.56px;font-size:16.00px;color:#333f50;font-weight:bold;font-style:normal;">1</div>
<div class="t" style="left:831.30px;top:742.76px;font-size:15.40px;color:#000000;font-weight:normal;font-style:normal;transform:scaleX(0.9846);transform-origin:0 0;-webkit-text-stroke:0.15px #000;">Changes in labor laws</div>
<div class="t" style="left:807.55px;top:772.56px;font-size:16.00px;color:#333f50;font-weight:bold;font-style:normal;">2</div>
<div class="t" style="left:831.30px;top:772.76px;font-size:15.40px;color:#000000;font-weight:normal;font-style:normal;transform:scaleX(1.0403);transform-origin:0 0;-webkit-text-stroke:0.15px #000;">Intellectual property laws</div>
<div class="t" style="left:807.55px;top:802.56px;font-size:16.00px;color:#333f50;font-weight:bold;font-style:normal;">3</div>
<div class="t" style="left:831.30px;top:802.76px;font-size:15.40px;color:#000000;font-weight:normal;font-style:normal;transform:scaleX(1.0235);transform-origin:0 0;-webkit-text-stroke:0.15px #000;">Consumer protection laws</div>
<div class="t" style="left:807.55px;top:832.56px;font-size:16.00px;color:#333f50;font-weight:bold;font-style:normal;">4</div>
<div class="t" style="left:831.30px;top:832.76px;font-size:15.40px;color:#000000;font-weight:normal;font-style:normal;transform:scaleX(1.0383);transform-origin:0 0;-webkit-text-stroke:0.15px #000;">Environmental protection laws</div>
<div class="t" style="left:807.55px;top:862.56px;font-size:16.00px;color:#333f50;font-weight:bold;font-style:normal;">5</div>
<div class="t" style="left:831.30px;top:862.76px;font-size:15.40px;color:#000000;font-weight:normal;font-style:normal;-webkit-text-stroke:0.15px #000;">Data privacy laws</div>
<div class="t" style="left:807.55px;top:892.56px;font-size:16.00px;color:#333f50;font-weight:bold;font-style:normal;">6</div>
<div class="t" style="left:831.30px;top:892.76px;font-size:15.40px;color:#000000;font-weight:normal;font-style:normal;transform:scaleX(1.0105);transform-origin:0 0;-webkit-text-stroke:0.15px #000;">Corporate governance regulations</div>
<div class="r" style="left:796px;top:735px;width:1px;height:277px;background:#333f50"></div>
<div class="r" style="left:827px;top:735px;width:1px;height:277px;background:#333f50"></div>
<div class="r" style="left:1319px;top:735px;width:1px;height:277px;background:#333f50"></div>
<div class="t" style="left:1031.90px;top:708.56px;font-size:18.00px;color:#ffffff;font-weight:bold;font-style:normal;transform:scaleX(0.8702);transform-origin:0 0;">LEGAL</div>
<div class="r" style="left:1379px;top:698px;width:514px;height:37px;background:#0070c0"></div>
<div class="r" style="left:1379px;top:698px;width:514px;height:1px;background:#0b5a9e"></div>
<div class="r" style="left:1379px;top:698px;width:1px;height:37px;background:#0b5a9e"></div>
<div class="r" style="left:1379px;top:735px;width:514px;height:30px;background:#e4f1fc"></div>
<div class="r" style="left:1379px;top:765px;width:514px;height:30px;background:#ffffff"></div>
<div class="r" style="left:1379px;top:795px;width:514px;height:30px;background:#e4f1fc"></div>
<div class="r" style="left:1379px;top:825px;width:514px;height:30px;background:#ffffff"></div>
<div class="r" style="left:1379px;top:855px;width:514px;height:30px;background:#e4f1fc"></div>
<div class="r" style="left:1379px;top:885px;width:514px;height:30px;background:#ffffff"></div>
<div class="r" style="left:1379px;top:915px;width:514px;height:30px;background:#e4f1fc"></div>
<div class="r" style="left:1379px;top:945px;width:514px;height:30px;background:#ffffff"></div>
<div class="r" style="left:1379px;top:975px;width:514px;height:30px;background:#e4f1fc"></div>
<div class="r" style="left:1379px;top:1005px;width:514px;height:7px;background:#ffffff"></div>
<div class="r" style="left:1379px;top:735px;width:514px;height:1px;background:#0b5a9e"></div>
<div class="r" style="left:1379px;top:765px;width:514px;height:1px;background:#0b5a9e"></div>
<div class="r" style="left:1379px;top:795px;width:514px;height:1px;background:#0b5a9e"></div>
<div class="r" style="left:1379px;top:825px;width:514px;height:1px;background:#0b5a9e"></div>
<div class="r" style="left:1379px;top:855px;width:514px;height:1px;background:#0b5a9e"></div>
<div class="r" style="left:1379px;top:885px;width:514px;height:1px;background:#0b5a9e"></div>
<div class="r" style="left:1379px;top:915px;width:514px;height:1px;background:#0b5a9e"></div>
<div class="r" style="left:1379px;top:945px;width:514px;height:1px;background:#0b5a9e"></div>
<div class="r" style="left:1379px;top:975px;width:514px;height:1px;background:#0b5a9e"></div>
<div class="r" style="left:1379px;top:1005px;width:514px;height:1px;background:#0b5a9e"></div>
<div class="t" style="left:1390.55px;top:742.56px;font-size:16.00px;color:#0b5394;font-weight:bold;font-style:normal;">1</div>
<div class="t" style="left:1414.30px;top:742.76px;font-size:15.40px;color:#000000;font-weight:normal;font-style:normal;-webkit-text-stroke:0.15px #000;">Climate change impacts</div>
<div class="t" style="left:1390.55px;top:772.56px;font-size:16.00px;color:#0b5394;font-weight:bold;font-style:normal;">2</div>
<div class="t" style="left:1414.30px;top:772.76px;font-size:15.40px;color:#000000;font-weight:normal;font-style:normal;transform:scaleX(1.0126);transform-origin:0 0;-webkit-text-stroke:0.15px #000;">Natural disasters</div>
<div class="t" style="left:1390.55px;top:802.56px;font-size:16.00px;color:#0b5394;font-weight:bold;font-style:normal;">3</div>
<div class="t" style="left:1414.30px;top:802.76px;font-size:15.40px;color:#000000;font-weight:normal;font-style:normal;transform:scaleX(1.0229);transform-origin:0 0;-webkit-text-stroke:0.15px #000;">Water scarcity</div>
<div class="t" style="left:1390.55px;top:832.56px;font-size:16.00px;color:#0b5394;font-weight:bold;font-style:normal;">4</div>
<div class="t" style="left:1414.30px;top:832.76px;font-size:15.40px;color:#000000;font-weight:normal;font-style:normal;transform:scaleX(1.0249);transform-origin:0 0;-webkit-text-stroke:0.15px #000;">Energy consumption patterns</div>
<div class="t" style="left:1390.55px;top:862.56px;font-size:16.00px;color:#0b5394;font-weight:bold;font-style:normal;">5</div>
<div class="t" style="left:1414.30px;top:862.76px;font-size:15.40px;color:#000000;font-weight:normal;font-style:normal;transform:scaleX(1.0215);transform-origin:0 0;-webkit-text-stroke:0.15px #000;">Waste management trends</div>
<div class="t" style="left:1390.55px;top:892.56px;font-size:16.00px;color:#0b5394;font-weight:bold;font-style:normal;">6</div>
<div class="t" style="left:1414.30px;top:892.76px;font-size:15.40px;color:#000000;font-weight:normal;font-style:normal;transform:scaleX(1.0137);transform-origin:0 0;-webkit-text-stroke:0.15px #000;">Carbon emissions and reduction targets.</div>
<div class="r" style="left:1379px;top:735px;width:1px;height:277px;background:#0b5a9e"></div>
<div class="r" style="left:1410px;top:735px;width:1px;height:277px;background:#0b5a9e"></div>
<div class="t" style="left:1563.90px;top:708.56px;font-size:18.00px;color:#ffffff;font-weight:bold;font-style:normal;transform:scaleX(0.9945);transform-origin:0 0;">ENVIRONMENTAL</div>
<svg class="r" style="left:217px;top:321px" width="45" height="45" viewBox="0 0 100 100">
<defs><clipPath id="cpol"><circle cx="50" cy="50" r="50"/></clipPath></defs>
<g clip-path="url(#cpol)">
<rect x="0" y="0" width="100" height="100" fill="#72b4e6"/>
<path d="M55 22 Q75 14 92 28 L100 40 L70 40 Z" fill="#5da5dd"/>
<path d="M0 38 Q20 32 38 40 L30 46 L0 46 Z" fill="#5da5dd"/>
<path d="M78 56 Q92 58 100 66 L74 66 Z" fill="#5da5dd"/>
<rect x="0" y="66.5" width="100" height="40" fill="#cdcdcd"/>
<path d="M45.5 13 L54.5 13 L54.5 6 Q50 3.5 45.5 6 Z" fill="#e2e2e2"/>
<circle cx="50" cy="3.5" r="2.3" fill="#333"/>
<path d="M28 36 Q28 13 50 13 Q72 13 72 36 Z" fill="#e4e4e4"/>
<path d="M28 36 Q28 15 45 13.5 Q36 20 36 36 Z" fill="#d2d2d2"/>
<rect x="24.8" y="35.5" width="50.4" height="4.5" fill="#f5f5f5"/>
<rect x="27" y="40" width="46" height="8" fill="#c9c9c9"/>
<g fill="#7a7a7a"><rect x="28.5" y="41" width="2" height="6"/><rect x="33" y="41" width="2" height="6"/><rect x="37.5" y="41" width="2" height="6"/><rect x="42" y="41" width="2" height="6"/><rect x="46.5" y="41" width="2" height="6"/><rect x="51" y="41" width="2" height="6"/><rect x="55.5" y="41" width="2" height="6"/><rect x="60" y="41" width="2" height="6"/><rect x="64.5" y="41" width="2" height="6"/><rect x="69" y="41" width="2" height="6"/></g>
<rect x="22.5" y="48" width="55.3" height="4.2" fill="#f5f5f5"/>
<rect x="27" y="52" width="46.7" height="14.5" fill="#dedede"/>
<g fill="#cbcbcb"><rect x="30" y="52" width="3" height="14.5"/><rect x="39" y="52" width="3" height="14.5"/><rect x="48" y="52" width="3" height="14.5"/><rect x="57" y="52" width="3" height="14.5"/><rect x="66" y="52" width="3" height="14.5"/></g>
<rect x="18" y="66.5" width="64.4" height="4.6" fill="#f3f3f3"/>
<g fill="#e2e2e2"><rect x="24" y="71" width="6" height="30"/><rect x="36" y="71" width="6" height="30"/><rect x="48" y="71" width="6" height="30"/><rect x="60" y="71" width="6" height="30"/><rect x="72" y="71" width="6" height="30"/></g>
<g fill="#6e6e6e"><rect x="29" y="76" width="4.4" height="9.5"/><rect x="42" y="76" width="4" height="9.5"/><rect x="54" y="76" width="4" height="9.5"/><rect x="67.4" y="76" width="4" height="9.5"/></g>
</g></svg>
<svg class="r" style="left:794px;top:318px" width="56" height="56" viewBox="0 0 56 56">
<g fill="none" stroke="#2f6fd2" stroke-width="1.15" stroke-linecap="round">
<path d="M12.2 10.5 A21.5 21.5 0 0 1 20.5 6"/>
<path d="M7.5 16 A21.5 21.5 0 0 0 5 27.5"/>
<path d="M7.3 35.5 A21.5 21.5 0 0 0 18.8 45.6"/>
<path d="M26.8 47 A21.5 21.5 0 0 0 47.3 20.5"/>
</g>
<path d="M44.2 19.8 L49.5 20.8 L46 18.3 Z M44 20.5 L46.5 18.5 L49.3 20.8 Z" fill="#2f6fd2" stroke="#2f6fd2" stroke-width="1.4" stroke-linejoin="round"/>
<rect x="18.1" y="13.2" width="3.9" height="9.1" fill="#fdd835"/>
<rect x="24.3" y="9.8" width="3.9" height="12.5" fill="#35cc3a"/>
<rect x="30.5" y="6" width="4" height="16.3" fill="#ff4a1c"/>
<rect x="14" y="22.4" width="24.4" height="1.4" rx="0.6" fill="#3d7fcf"/>
<text x="41" y="16.2" font-family="Liberation Sans" font-weight="bold" font-size="11.5" fill="#35c23a" text-anchor="middle">$</text>
<path d="M9.1 25.9 L43.5 25.9 A17.2 17.1 0 0 1 9.1 25.9 Z" fill="#1565c8"/>
<path d="M9.1 25.9 L15 25.9 Q15.5 35 19 38.5 Q11 34 9.1 25.9 Z" fill="#0d47a1"/>
<path d="M15 35 Q17 31 20 30 Q20 28 24.5 28 L28 29.8 L25 31.2 L23 33 L22.5 38 L28.5 42.7 Q20 43 15 35 Z" fill="#33d133"/>
<path d="M33 31.5 L37.5 30.5 L40.5 33.5 L39 34 L36.5 32.3 Z" fill="#33d133"/>
<path d="M27.5 34 L30 34.5 L31.2 36.2 L29 36 Z" fill="#33d133"/>
</svg>
<svg class="r" style="left:1377px;top:318px" width="56" height="56" viewBox="0 0 56 56">
<defs><clipPath id="csoc"><circle cx="29.5" cy="19.7" r="14.5"/></clipPath></defs>
<circle cx="29.5" cy="19.7" r="14.5" fill="#47c4f5"/>
<g clip-path="url(#csoc)">
<path d="M29.5 20 L29.5 5 L44 5 L44 20 Z" fill="#2aa7ee"/>
<path d="M33 22 L44 22 L44 35 L33 35 Q38 28 33 22 Z" fill="#4a9c45"/>
<path d="M18 8 Q24 4.5 30 5 L34 6 L28 9 Z" fill="#8cc541"/>
<path d="M34 5 L40 6 L36 9 Z" fill="#4a9c45"/>
<ellipse cx="20.5" cy="24" rx="4.5" ry="2.3" fill="#8cc541"/>
</g>
<circle cx="29.5" cy="16.6" r="9.5" fill="#ef6422"/>
<path d="M28.3 10 L30.8 10 L30.4 19.2 L28.7 19.2 Z" fill="#d8ecf8"/>
<circle cx="29.5" cy="22.4" r="1.5" fill="#d8ecf8"/>
<path d="M8.6 47.4 L8.6 39 Q8.6 35.8 12 35.8 L18.5 35.8 Q22 35.8 22 39 L22 47.4 Z" fill="#525b70"/>
<circle cx="15.3" cy="38.5" r="0.8" fill="#f0a030"/><circle cx="15.3" cy="42.8" r="0.8" fill="#f0a030"/>
<circle cx="15.3" cy="31.8" r="3.7" fill="#f8b98f"/>
<rect x="11.8" y="25.4" width="6.8" height="3.6" fill="#ef5b2a"/>
<path d="M22.8 47.4 L22.8 39 Q22.8 35.8 26 35.8 L33 35.8 Q36.3 35.8 36.3 39 L36.3 47.4 Z" fill="#d8eaf6"/>
<rect x="28.5" y="35.8" width="1.8" height="11.6" fill="#ef6422"/>
<circle cx="29.5" cy="31.3" r="3.7" fill="#f8b98f"/>
<path d="M25.8 30 Q26 26.5 29.5 26.5 Q33 26.5 33.2 30 L32 28.8 L27 28.8 Z" fill="#30334a"/>
<path d="M36.8 47.4 L36.8 39 Q36.8 36 40 36 L47 36 Q50.3 36 50.3 39 L50.3 47.4 Z" fill="#f7b68c"/>
<rect x="39.2" y="40.8" width="8.8" height="5.4" fill="#ef6422"/>
<circle cx="43.5" cy="31.6" r="3.7" fill="#f8b98f"/>
<path d="M39.8 29.5 Q40 26.8 43.5 26.8 Q47 26.8 47.2 29.5 Z" fill="#30334a"/>
<rect x="39.8" y="28.3" width="7.4" height="1.3" fill="#ef5b2a"/>
<path d="M40 34 L42 35.5 M47 34 L45 35.5" stroke="#30334a" stroke-width="1.4"/>
</svg>
<svg class="r" style="left:212px;top:682px" width="56" height="56" viewBox="0 0 56 56">
<defs><clipPath id="ctec"><circle cx="26.5" cy="27.1" r="21.6"/></clipPath></defs>
<circle cx="26.5" cy="27.1" r="21.6" fill="#463f8b"/>
<g clip-path="url(#ctec)">
<circle cx="28" cy="16.6" r="8.4" fill="#5f55b3"/>
<g fill="#5c54a8"><circle cx="12.7" cy="14.3" r="0.9"/><circle cx="16.3" cy="14.3" r="0.9"/><circle cx="9.1" cy="17.9" r="0.9"/><circle cx="12.7" cy="17.9" r="0.9"/><circle cx="16.3" cy="17.9" r="0.9"/><circle cx="9.1" cy="21.5" r="0.9"/><circle cx="12.7" cy="21.5" r="0.9"/><circle cx="16.3" cy="21.5" r="0.9"/></g>
<path d="M34 32.4 L48 32.4 M33 38.1 L46 38.1" stroke="#6a5fc0" stroke-width="1.4"/>
<ellipse cx="42.5" cy="32.4" rx="1.1" ry="2" fill="#7fc6f7"/>
<ellipse cx="37.3" cy="38.1" rx="1.1" ry="2" fill="#7fc6f7"/>
<circle cx="28" cy="16.6" r="4.4" fill="#62b4f5"/>
<path d="M19 50 L19 40 Q16 36 16 33 L16 25.5 Q17 24 18.5 25 Q19.5 24 21 25 Q22 24 23.5 25 Q25 24.5 26.4 25.5 L26.4 18.2 Q28.2 15.6 30 18.2 L30 32.5 L31 33 L35.5 25.5 Q37.5 24.8 38.5 26.5 L32 38.5 Q31 41 31 44 L31 50 Z" fill="#f9b99f"/>
<path d="M23 40 Q24 35 28 33.5" stroke="#ec9f86" stroke-width="0.8" fill="none"/>
<g fill="#fff" opacity="0.9"><circle cx="17.6" cy="30" r="0.9"/><circle cx="21" cy="31.5" r="0.9"/><circle cx="24.5" cy="33.5" r="0.9"/></g>
</g>
<circle cx="28.1" cy="17.3" r="1.5" fill="#eef6ff"/>
<path d="M34.6 15 L48.6 15 M34.6 18.9 L41.9 18.9" stroke="#a8d8f8" stroke-width="1.5" stroke-linecap="round"/>
</svg>
<svg class="r" style="left:794px;top:682px" width="56" height="56" viewBox="0 0 56 56">
<defs><clipPath id="cleg"><circle cx="24.5" cy="28.3" r="21.5"/></clipPath></defs>
<circle cx="24.5" cy="28.3" r="21.5" fill="#74c5f8"/>
<g clip-path="url(#cleg)">
<path d="M6 44 L6 36 Q6 33.5 10 33.5 L10.3 32.2 L33.5 32.2 L34.5 33.5 Q37 33.5 37 36 L37 44 Z" fill="#4d70bb"/>
<path d="M6 44 L6 36 Q6 33.5 10 33.5 L17 33.5 L17 44 Z" fill="#3e5ba8"/>
<rect x="10.3" y="32.2" width="23.2" height="2" fill="#3b55a0"/>
<rect x="10" y="44" width="28.5" height="2.4" fill="#fddc35"/>
<rect x="10" y="44" width="7" height="2.4" fill="#f6b52a"/>
<rect x="4" y="46.4" width="40" height="5" fill="#2d45a0"/>
</g>
<g transform="translate(24.7 18.2) rotate(40)">
<rect x="4" y="-1.5" width="23" height="3" rx="1.5" fill="#2e4a9e"/>
<rect x="7" y="-2.6" width="8" height="5.2" rx="2.6" fill="#2e4a9e"/>
<rect x="19" y="-1.7" width="1.9" height="3.4" fill="#f9c22b"/>
<rect x="-7" y="-12.8" width="14" height="3" rx="0.6" fill="#4b6cb7"/>
<rect x="-7" y="9.8" width="14" height="3" rx="0.6" fill="#4b6cb7"/>
<rect x="-6.5" y="-10" width="13" height="2" fill="#fdd835"/>
<rect x="-6.5" y="8" width="13" height="2" fill="#fdd835"/>
<rect x="-5.6" y="-8" width="11.2" height="16" fill="#ffb02e"/>
<rect x="-5.6" y="-8" width="3.6" height="16" fill="#ff9a0a"/>
<rect x="5.6" y="-2.6" width="2" height="5.2" fill="#fdd835"/>
</g>
</svg>
<svg class="r" style="left:1377px;top:682px" width="56" height="56" viewBox="0 0 56 56">
<path d="M7 31.1 L41.5 31.1 A17.2 17 0 0 1 7 31.1 Z" fill="#4b8cf5"/>
<path d="M10 31.1 L15.5 31.1 Q14.8 34 15.2 36 Q14 39 13.5 41.5 Q12 37 10 31.1 Z" fill="#74a548"/>
<path d="M17 31.1 L29.8 31.1 Q32 33 32.3 35.3 Q29 37 27.5 40.5 Q26.5 44 24 45.5 Q22 42 22.3 38.5 Q19 35 17 31.1 Z" fill="#74a548"/>
<path d="M35 33 Q38 31 41.5 31.5 L41 34 Q38.5 33.5 35.5 34 Z" fill="#74a548"/>
<path d="M10.4 24 Q8.5 24 6.8 24 Q4 24 3 22.5 Q3 20.3 5.5 20.3 Q6 18 8.3 18 Q10.5 18 11 20.5 Q12.5 21 12 23 Z" fill="#ebebeb"/>
<path d="M7 31.1 L14.8 13.8 L22 31.1 Z" fill="#f29b18"/>
<path d="M10.5 31.1 L20.5 11.1 L29.5 31.1 Z" fill="#ffa51c"/>
<path d="M18.4 15.2 L20.5 11.1 L22.6 15.2 L21.2 16.5 L20.5 15.5 L19.7 16.5 Z" fill="#ffcbb3"/>
<path d="M13.4 16.8 L14.8 13.8 L16.3 16.8 L15.5 17.8 L14.8 17 L14 17.8 Z" fill="#ffcbb3"/>
<rect x="29.4" y="22.5" width="1.8" height="8.6" fill="#a0522d"/>
<path d="M24.4 22.8 L26.5 19 L25.6 19 L28 14 L27 14 L30.3 7.3 L33.6 14 L32.6 14 L35 19 L34.1 19 L36.2 22.8 Z" fill="#5e8b3c"/>
<rect x="37.2" y="27" width="1.8" height="4.1" fill="#a0522d"/>
<path d="M33 27 L35 23.5 L34.2 23.5 L36.2 19.5 L35.4 19.5 L38.1 13.5 L40.8 19.5 L40 19.5 L42 23.5 L41.2 23.5 L43.3 27 Z" fill="#8cb866"/>
<path d="M35.5 12.7 Q34.8 12.7 35 11.2 Q35.5 9.8 37 10 Q37.5 7 40 7 Q42.5 7 43 9.5 Q44.8 9.6 44.6 11.3 Q44.5 12.7 43.5 12.7 Z" fill="#e9e9e9"/>
</svg>
<div class="r" style="left:0px;top:301px;width:1893px;height:1px;background:#9c9c9c"></div>
<div class="r" style="left:202px;top:189px;width:1px;height:823px;background:#b8b8b8"></div>
<div class="r" style="left:202.5px;top:300px;width:13px;height:33px;border:2.4px solid #107c41"></div>
<div class="r" style="left:210.5px;top:329px;width:6px;height:5.5px;background:#107c41"></div>
<svg class="r" style="left:0px;top:189px" width="202" height="112" viewBox="0 189 202 112">
<defs>
<path id="lgtop" d="M18.3 234.7 A29 29 0 0 1 76.3 234.7"/>
<path id="lgbot" d="M11.8 234.7 A35.5 35.5 0 0 0 82.8 234.7"/>
</defs>
<g font-family="Liberation Sans" font-size="8.6" fill="#c8cbce">
<text letter-spacing="2.1"><textPath href="#lgtop" startOffset="50%" text-anchor="middle">SIREXCELCO</textPath></text>
<text letter-spacing="2.7"><textPath href="#lgbot" startOffset="50%" text-anchor="middle">SIREXCELCO</textPath></text>
</g>
<circle cx="15" cy="234.7" r="1.9" fill="#d0d3d5"/>
<circle cx="79.5" cy="234.7" r="1.9" fill="#d0d3d5"/>
<g fill="none" stroke="#c9cccf" stroke-width="1.05" stroke-linecap="round" stroke-linejoin="round">
<rect x="31.2" y="229.3" width="32.3" height="4" rx="2"/>
<path d="M38.6 229.3 L38.6 220 Q38.6 218.2 40.4 218.2 L54.6 218.2 Q56.4 218.2 56.4 220 L56.4 229.3"/>
<path d="M38.6 225.1 L56.4 225.1"/>
<circle cx="42.5" cy="239.3" r="3.3"/>
<path d="M33.3 250.3 L33.3 243 Q33.3 240.4 36 240.4 L39.2 240.4"/>
<path d="M56.2 236.7 L49.6 239.6 L56.2 242.5"/>
<path d="M46.5 245.5 Q44 251.5 39.5 251 Q36.5 250.5 35.4 247.3 Q39.5 248.8 42.5 247.5 Q44.8 246.5 46.5 245.5 Z"/>
<path d="M48 245.5 Q50.5 251.5 55 251 Q58 250.5 59.1 247.3 Q55 248.8 52 247.5 Q49.7 246.5 48 245.5 Z"/>
</g>
<g fill="#c9cccf"><circle cx="50" cy="227.3" r="0.55"/><circle cx="52.2" cy="227.3" r="0.55"/><circle cx="54.4" cy="227.3" r="0.55"/></g>
</svg>
<div class="t" style="left:14.60px;top:284.06px;font-size:14.70px;color:#ffffff;font-weight:bold;font-style:normal;transform:scaleX(0.8901);transform-origin:0 0;">PESTLE ANALYSIS</div>
<div class="t" style="left:35.80px;top:311.63px;font-size:15.80px;color:#f2f2f2;font-weight:normal;font-style:italic;transform:scaleX(0.9243);transform-origin:0 0;">Terms of Use</div>
<div class="r" style="left:0px;top:1012px;width:1920px;height:40px;background:#e6e6e6"></div>
<div class="r" style="left:134px;top:1012px;width:120px;height:10px;background:#ffffff"></div>
<div class="r" style="left:0px;top:1012.5px;width:141px;height:40px;background:#e6e6e6;border-top-right-radius:7px"></div>
<div class="r" style="left:248px;top:1012.5px;width:1672px;height:40px;background:#e6e6e6;border-top-left-radius:7px"></div>
<svg class="r" style="left:31px;top:1023px" width="10" height="16" viewBox="0 0 10 16"><path d="M8 1.5 L2 8 L8 14.5" stroke="#9a9a9a" stroke-width="1.3" fill="none"/></svg>
<svg class="r" style="left:71px;top:1023px" width="10" height="16" viewBox="0 0 10 16"><path d="M2 1.5 L8 8 L2 14.5" stroke="#9a9a9a" stroke-width="1.3" fill="none"/></svg>
<div class="r" style="left:141px;top:1012px;width:107px;height:35px;background:#fff;border-radius:0 0 7px 7px"></div>
<div class="t" style="left:151.70px;top:1020.69px;font-size:17.50px;color:#1f1f1f;font-weight:bold;font-style:normal;transform:scaleX(0.9332);transform-origin:0 0;">Dashboard</div>
<div class="r" style="left:151px;top:1042px;width:87px;height:2px;background:#107c41;border-radius:1px"></div>
<div class="r" style="left:253px;top:1020px;width:1px;height:24px;background:#c8c8c8"></div>
<div class="t" style="left:270.00px;top:1023.91px;font-size:17.00px;color:#262626;font-weight:normal;font-style:normal;transform:scaleX(1.0254);transform-origin:0 0;">ToU</div>
<div class="r" style="left:316px;top:1020px;width:1px;height:24px;background:#c8c8c8"></div>
<svg class="r" style="left:369px;top:1024px" width="15" height="15" viewBox="0 0 15 15"><path d="M7.5 0.5 L7.5 14.5 M0.5 7.5 L14.5 7.5" stroke="#8a8a8a" stroke-width="1.3"/></svg>
<div class="r" style="left:1154px;top:1026px;width:3px;height:3px;background:#444;border-radius:1px"></div>
<div class="r" style="left:1154px;top:1031px;width:3px;height:3px;background:#444;border-radius:1px"></div>
<div class="r" style="left:1154px;top:1036px;width:3px;height:3px;background:#444;border-radius:1px"></div>
<div class="r" style="left:1176px;top:1021px;width:718px;height:21px;background:#f5f5f5;border-radius:10.5px"></div>
<svg class="r" style="left:1183px;top:1026px" width="8" height="11" viewBox="0 0 8 11"><path d="M7.5 0.5 L7.5 10.5 L0.5 5.5 Z" fill="#6e6e6e" stroke="#6e6e6e" stroke-linejoin="round"/></svg>
<div class="r" style="left:1197px;top:1026px;width:646px;height:11px;background:#707070;border-radius:5.5px"></div>
<svg class="r" style="left:1881px;top:1026px" width="8" height="11" viewBox="0 0 8 11"><path d="M0.5 0.5 L0.5 10.5 L7.5 5.5 Z" fill="#6e6e6e" stroke="#6e6e6e" stroke-linejoin="round"/></svg>
<div class="r" style="left:0px;top:1052px;width:1920px;height:28px;background:#f3f3f3"></div>
<div class="t" style="left:9.40px;top:1060.42px;font-size:12.50px;color:#333333;font-weight:normal;font-style:normal;transform:scaleX(0.9797);transform-origin:0 0;">Ready</div>
<svg class="r" style="left:60px;top:1052px" width="80" height="28" viewBox="60 1052 80 28"><path d="M75.7 1073.6 L70.8 1073.6 L70.8 1058.8 L87.2 1058.8 L87.2 1063.4 M70.8 1061.4 L87.2 1061.4" stroke="#2b2b2b" stroke-width="1.3" fill="none"/><path d="M73.2 1064.2 L76.3 1064.2 M73.2 1066.7 L74.6 1066.7 M73.2 1069.3 L74.6 1069.3" stroke="#2b2b2b" stroke-width="1.1"/><circle cx="81.9" cy="1069" r="4.8" stroke="#2b2b2b" stroke-width="1.3" fill="#f3f3f3"/><circle cx="81.9" cy="1069" r="1.9" fill="#2b2b2b"/><circle cx="117.7" cy="1059.9" r="2" stroke="#2b2b2b" stroke-width="1.1" fill="none"/><path d="M115.6 1062.3 Q113 1060.4 111.4 1061.2 Q109.8 1062.6 111.6 1063.6 L114.6 1065.2 L114.9 1067.6 L113 1072.4 Q112.8 1074.6 114.7 1074.4 Q115.4 1074.2 116 1072.8 L117.3 1068.6 L118.6 1070.8 M121 1064.8 L123.4 1063.6 Q125.4 1062.4 124.2 1061.2 Q122.6 1060.3 119.8 1062.3" stroke="#2b2b2b" stroke-width="1.15" fill="none" stroke-linejoin="round"/><path d="M119.3 1066.3 L127.7 1074.5 M127.7 1066.3 L119.3 1074.5" stroke="#2b2b2b" stroke-width="0.95"/></svg>
<div class="t" style="left:132.70px;top:1060.16px;font-size:12.80px;color:#333333;font-weight:normal;font-style:normal;transform:scaleX(0.9854);transform-origin:0 0;">Accessibility: Investigate</div>
<div class="r" style="left:1555px;top:1052px;width:50px;height:28px;background:#e0e0e0"></div>
<svg class="r" style="left:1571px;top:1057px" width="19" height="19" viewBox="0 0 19 19"><rect x="1" y="1" width="17" height="17" stroke="#444" stroke-width="1.2" fill="none"/><path d="M6.7 1 L6.7 18 M12.3 1 L12.3 18 M1 6.7 L18 6.7 M1 12.3 L18 12.3" stroke="#444" stroke-width="1.2"/></svg>
<svg class="r" style="left:1621px;top:1057px" width="19" height="19" viewBox="0 0 19 19"><rect x="1" y="1" width="17" height="17" stroke="#444" stroke-width="1.2" fill="none"/><rect x="4.5" y="4" width="10" height="11" stroke="#444" stroke-width="1.1" fill="none"/><path d="M6.5 7 L12.5 7 M6.5 9.5 L12.5 9.5 M6.5 12 L12.5 12" stroke="#444" stroke-width="1"/></svg>
<svg class="r" style="left:1671px;top:1057px" width="19" height="19" viewBox="0 0 19 19"><rect x="1" y="1" width="16.5" height="16" stroke="#444" stroke-width="1.2" fill="none"/><path d="M5.8 1 L5.8 9.4 M1 9.4 L12.3 9.4 L12.3 1" stroke="#444" stroke-width="1.2" fill="none"/></svg>
<div class="r" style="left:1711px;top:1066px;width:10px;height:1.2px;background:#444"></div>
<div class="r" style="left:1728px;top:1066px;width:125px;height:1px;background:#777"></div>
<div class="r" style="left:1781px;top:1060px;width:5px;height:12px;background:#555;border-radius:1px"></div>
<div class="r" style="left:1789px;top:1063px;width:1px;height:6px;background:#777"></div>
<svg class="r" style="left:1857px;top:1060px" width="13" height="13" viewBox="0 0 13 13"><path d="M6.5 0.5 L6.5 12.5 M0.5 6.5 L12.5 6.5" stroke="#444" stroke-width="1.2"/></svg>
<div class="t" style="left:1885.00px;top:1060.42px;font-size:12.50px;color:#333333;font-weight:normal;font-style:normal;">%90</div>
</body></html>
